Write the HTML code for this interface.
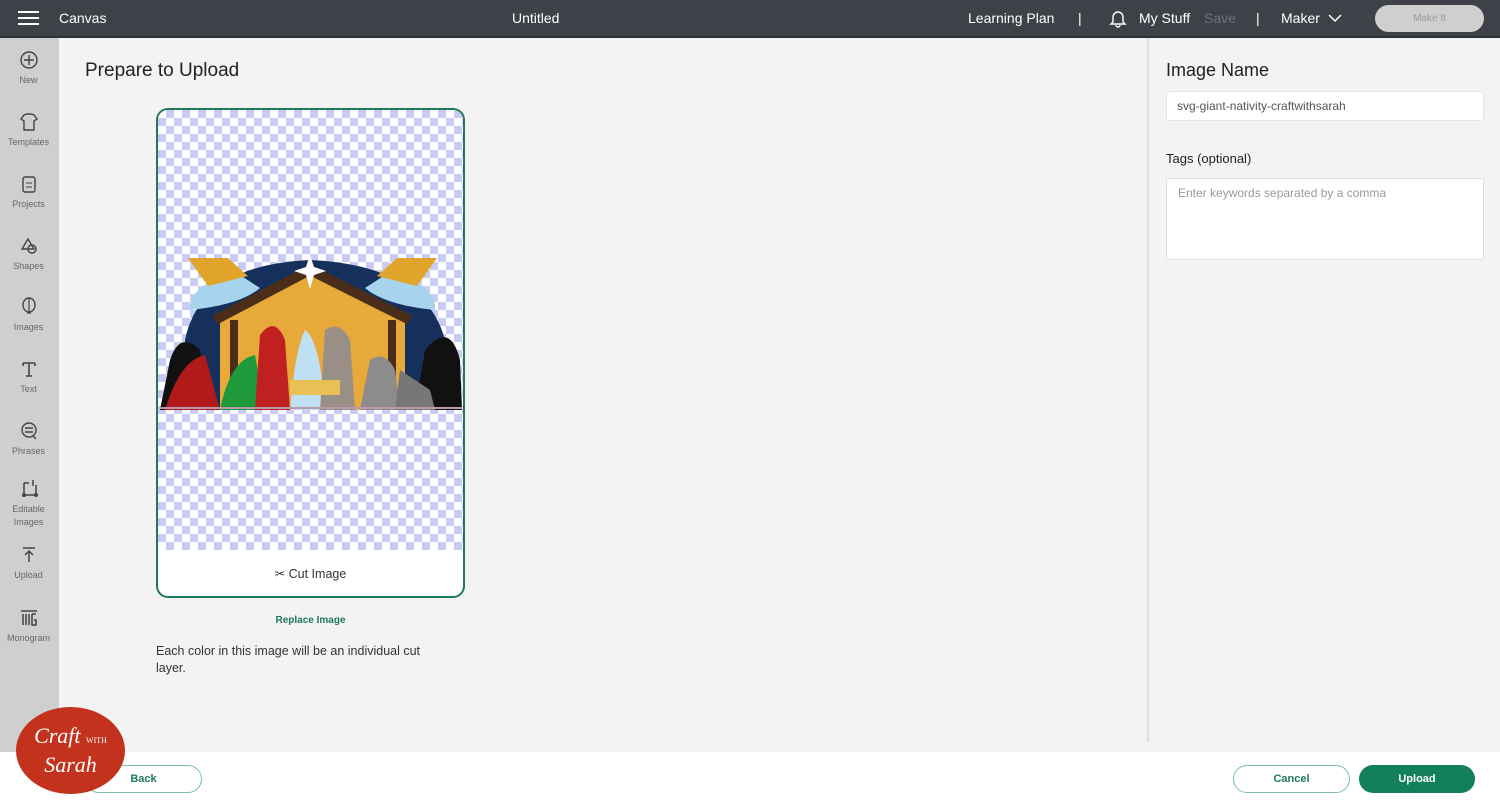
<!DOCTYPE html>
<html><head><meta charset="utf-8"><style>
*{box-sizing:border-box;margin:0;padding:0}
body{width:1500px;height:802px;overflow:hidden;background:#f3f3f3;font-family:"Liberation Sans",sans-serif;position:relative}
.hdr{position:absolute;left:0;top:0;width:1500px;height:38px;background:#3e4248;color:#fff;font-size:14px;border-bottom:2px solid #2d3035}
.hdr span{position:absolute;top:10px}
.side{position:absolute;left:0;top:38px;width:59px;height:764px;background:#cfcfcf}
.it{position:absolute;left:0;width:57px;text-align:center;font-size:9px;color:#666}
.it svg{display:block;margin:0 auto 5px}
.card{position:absolute;left:156px;top:108px;width:309px;height:490px;border:2px solid #1e7a58;border-radius:12px;overflow:hidden;background:#fff}
.chk{position:absolute;left:0;top:0;width:305px;height:440px;background-color:#fff;background-image:linear-gradient(45deg,#c9cbf4 25%,transparent 25%,transparent 75%,#c9cbf4 75%),linear-gradient(45deg,#c9cbf4 25%,transparent 25%,transparent 75%,#c9cbf4 75%);background-size:16px 16px;background-position:0 0,8px 8px}
.bot{position:absolute;left:0;top:752px;width:1500px;height:50px;background:#fff}
.btn{position:absolute;height:28px;border-radius:14px;font-size:11px;font-weight:bold;text-align:center;line-height:26px}
</style></head><body>
<div class="hdr">
<div style="position:absolute;left:18px;top:11px;width:21px;height:2px;background:#fff;box-shadow:0 6px 0 #fff,0 12px 0 #fff"></div>
<span style="left:59px">Canvas</span>
<span style="left:512px">Untitled</span>
<span style="left:968px">Learning Plan</span>
<span style="left:1078px">|</span>
<svg style="position:absolute;left:1109px;top:9px" width="18" height="19" viewBox="0 0 18 19"><path d="M4 13V8a5 5 0 0 1 10 0v5l2 2H2z M7 16a2 2 0 0 0 4 0" fill="none" stroke="#fff" stroke-width="1.4"/></svg>
<span style="left:1139px">My Stuff</span>
<span style="left:1204px;color:#6e7278">Save</span>
<span style="left:1256px">|</span>
<span style="left:1281px">Maker</span>
<svg style="position:absolute;left:1328px;top:13px" width="14" height="10"><path d="M1 2l6 6 6-6" fill="none" stroke="#fff" stroke-width="1.5"/></svg>
<div style="position:absolute;left:1375px;top:5px;width:109px;height:27px;border-radius:14px;background:#cfcfcf;color:#9a9a9a;font-size:10px;text-align:center;line-height:27px">Make It</div>
</div>
<div class="side">
<div class="it" style="top:12px"><svg width="20" height="20"><circle cx="10" cy="10" r="8" fill="none" stroke="#444" stroke-width="1.4"/><path d="M10 5v10M5 10h10" stroke="#444" stroke-width="1.4"/></svg>New</div>
<div class="it" style="top:74px"><svg width="20" height="20"><path d="M5 3l3-1h4l3 1 3 4-3 2v9H5V9L2 7z" fill="none" stroke="#444" stroke-width="1.4"/></svg>Templates</div>
<div class="it" style="top:136px"><svg width="20" height="20"><rect x="4" y="3" width="12" height="15" rx="2" fill="none" stroke="#444" stroke-width="1.4"/><path d="M7 9h6M7 13h6" stroke="#444"/></svg>Projects</div>
<div class="it" style="top:198px"><svg width="20" height="20"><path d="M3 13L9 3l6 10z" fill="none" stroke="#444" stroke-width="1.4"/><circle cx="13" cy="13" r="4" fill="none" stroke="#444" stroke-width="1.4"/></svg>Shapes</div>
<div class="it" style="top:259px"><svg width="20" height="20"><ellipse cx="10" cy="8" rx="6" ry="7" fill="none" stroke="#444" stroke-width="1.4"/><path d="M8 16h4M10 1v14" stroke="#444" stroke-width="1.2"/></svg>Images</div>
<div class="it" style="top:321px"><svg width="20" height="20"><path d="M4 4h12M10 4v13M7 17h6M4 4v3M16 4v3" stroke="#444" stroke-width="1.6" fill="none"/></svg>Text</div>
<div class="it" style="top:383px"><svg width="20" height="20"><circle cx="10" cy="9" r="7" fill="none" stroke="#444" stroke-width="1.4"/><path d="M6 7h8M6 11h8M14 15l3 3" stroke="#444" stroke-width="1.4"/></svg>Phrases</div>
<div class="it" style="top:440px;line-height:13px"><svg width="20" height="20"><path d="M5 5v12h12V7M5 5h5M14 2v6" stroke="#444" stroke-width="1.5" fill="none"/><circle cx="5" cy="17" r="2" fill="#444"/><circle cx="17" cy="17" r="2" fill="#444"/></svg>Editable<br>Images</div>
<div class="it" style="top:507px"><svg width="20" height="20"><path d="M4 3h12M10 17V6M6 10l4-4 4 4" stroke="#444" stroke-width="1.5" fill="none"/></svg>Upload</div>
<div class="it" style="top:570px"><svg width="20" height="20"><path d="M2 3h16M4 6v11M7 6v11M10 6v11M13 6h4M13 6v11h4v-5h-2" stroke="#444" stroke-width="1.5" fill="none"/></svg>Monogram</div>
</div>
<div style="position:absolute;left:85px;top:60px;font-size:19px;color:#222">Prepare to Upload</div>
<div class="card">
<div class="chk"></div>
<svg style="position:absolute;left:2px;top:140px" width="305" height="160" viewBox="0 0 305 160">
<path d="M25 160V90Q40 15 150 10Q265 15 285 90V160z" fill="#16305e"/>
<path d="M60 70L150 25L245 70L245 160H60z" fill="#e6a93a"/>
<path d="M55 70L150 20L250 70" stroke="#4a2e1a" stroke-width="10" fill="none"/>
<rect x="70" y="70" width="8" height="90" fill="#4a2e1a"/><rect x="228" y="70" width="8" height="90" fill="#4a2e1a"/>
<path d="M150 5l4 12 12 4-12 4-4 14-4-14-12-4 12-4z" fill="#fff"/>
<path d="M30 55Q35 30 80 25L100 38Q80 55 30 60z" fill="#a7d3ec"/><path d="M28 8l40 0 20 18-40 10z" fill="#e0a52a"/>
<path d="M275 55Q270 30 225 25L205 38Q225 55 275 60z" fill="#a7d3ec"/><path d="M277 8l-40 0-20 18 40 10z" fill="#e0a52a"/>
<path d="M0 160L10 110Q20 80 40 100L50 160z" fill="#111"/><path d="M255 160L265 100Q290 70 300 110L302 160z" fill="#111"/>
<path d="M5 160Q20 110 45 105L60 160z" fill="#b01a1a"/>
<path d="M60 160Q70 110 95 105L105 160z" fill="#1f9a3a"/>
<path d="M95 160L100 85Q115 65 125 90L130 160z" fill="#c02020"/>
<path d="M130 160Q135 100 145 80Q160 90 165 160z" fill="#bfe0f3"/>
<path d="M160 160L165 80Q180 70 190 90L195 160z" fill="#9a8f86"/>
<rect x="130" y="130" width="50" height="15" fill="#e8c054"/>
<path d="M200 160L210 110Q225 100 235 120L240 160z" fill="#8c8c8c"/>
<path d="M235 160L240 120L270 140L275 160z" fill="#777"/>
<path d="M0 158h302" stroke="#b9a" stroke-width="2"/>
</svg>
<div style="position:absolute;left:0;top:440px;width:305px;height:48px;text-align:center;line-height:48px;font-size:12.5px;color:#333">✂ Cut Image</div>
</div>
<div style="position:absolute;left:156px;top:615px;width:309px;text-align:center;font-size:10px;font-weight:bold;color:#1e7a58">Replace Image</div>
<div style="position:absolute;left:156px;top:643px;width:285px;font-size:12.5px;line-height:17px;color:#333">Each color in this image will be an individual cut layer.</div>
<div style="position:absolute;left:1147px;top:38px;width:2px;height:704px;background:#ddd"></div>
<div style="position:absolute;left:1166px;top:60px;font-size:18px;color:#222">Image Name</div>
<div style="position:absolute;left:1166px;top:91px;width:318px;height:30px;background:#fff;border:1px solid #e4e4e4;border-radius:3px;font-size:12px;color:#555;padding:7px 10px">svg-giant-nativity-craftwithsarah</div>
<div style="position:absolute;left:1166px;top:151px;font-size:13px;color:#222">Tags (optional)</div>
<div style="position:absolute;left:1166px;top:178px;width:318px;height:82px;background:#fff;border:1px solid #ddd;border-radius:3px;font-size:12px;color:#999;padding:7px 11px">Enter keywords separated by a comma</div>
<div class="bot"></div>
<div class="btn" style="left:85px;top:765px;width:117px;border:1.5px solid #7cbfa3;color:#1e7a58">Back</div>
<div class="btn" style="left:1233px;top:765px;width:117px;border:1.5px solid #7cbfa3;color:#1e7a58;background:#fff">Cancel</div>
<div class="btn" style="left:1359px;top:765px;width:116px;background:#12805c;color:#fff;line-height:28px">Upload</div>
<div style="position:absolute;left:16px;top:707px;width:109px;height:87px;border-radius:50%;background:#c3321c;color:#fff;font-family:'Liberation Serif',serif;font-style:italic;text-align:center;font-size:22px;line-height:24px;padding-top:17px">Craft <span style="font-size:8px;font-style:normal">WITH</span><br>Sarah</div>
</body></html>
